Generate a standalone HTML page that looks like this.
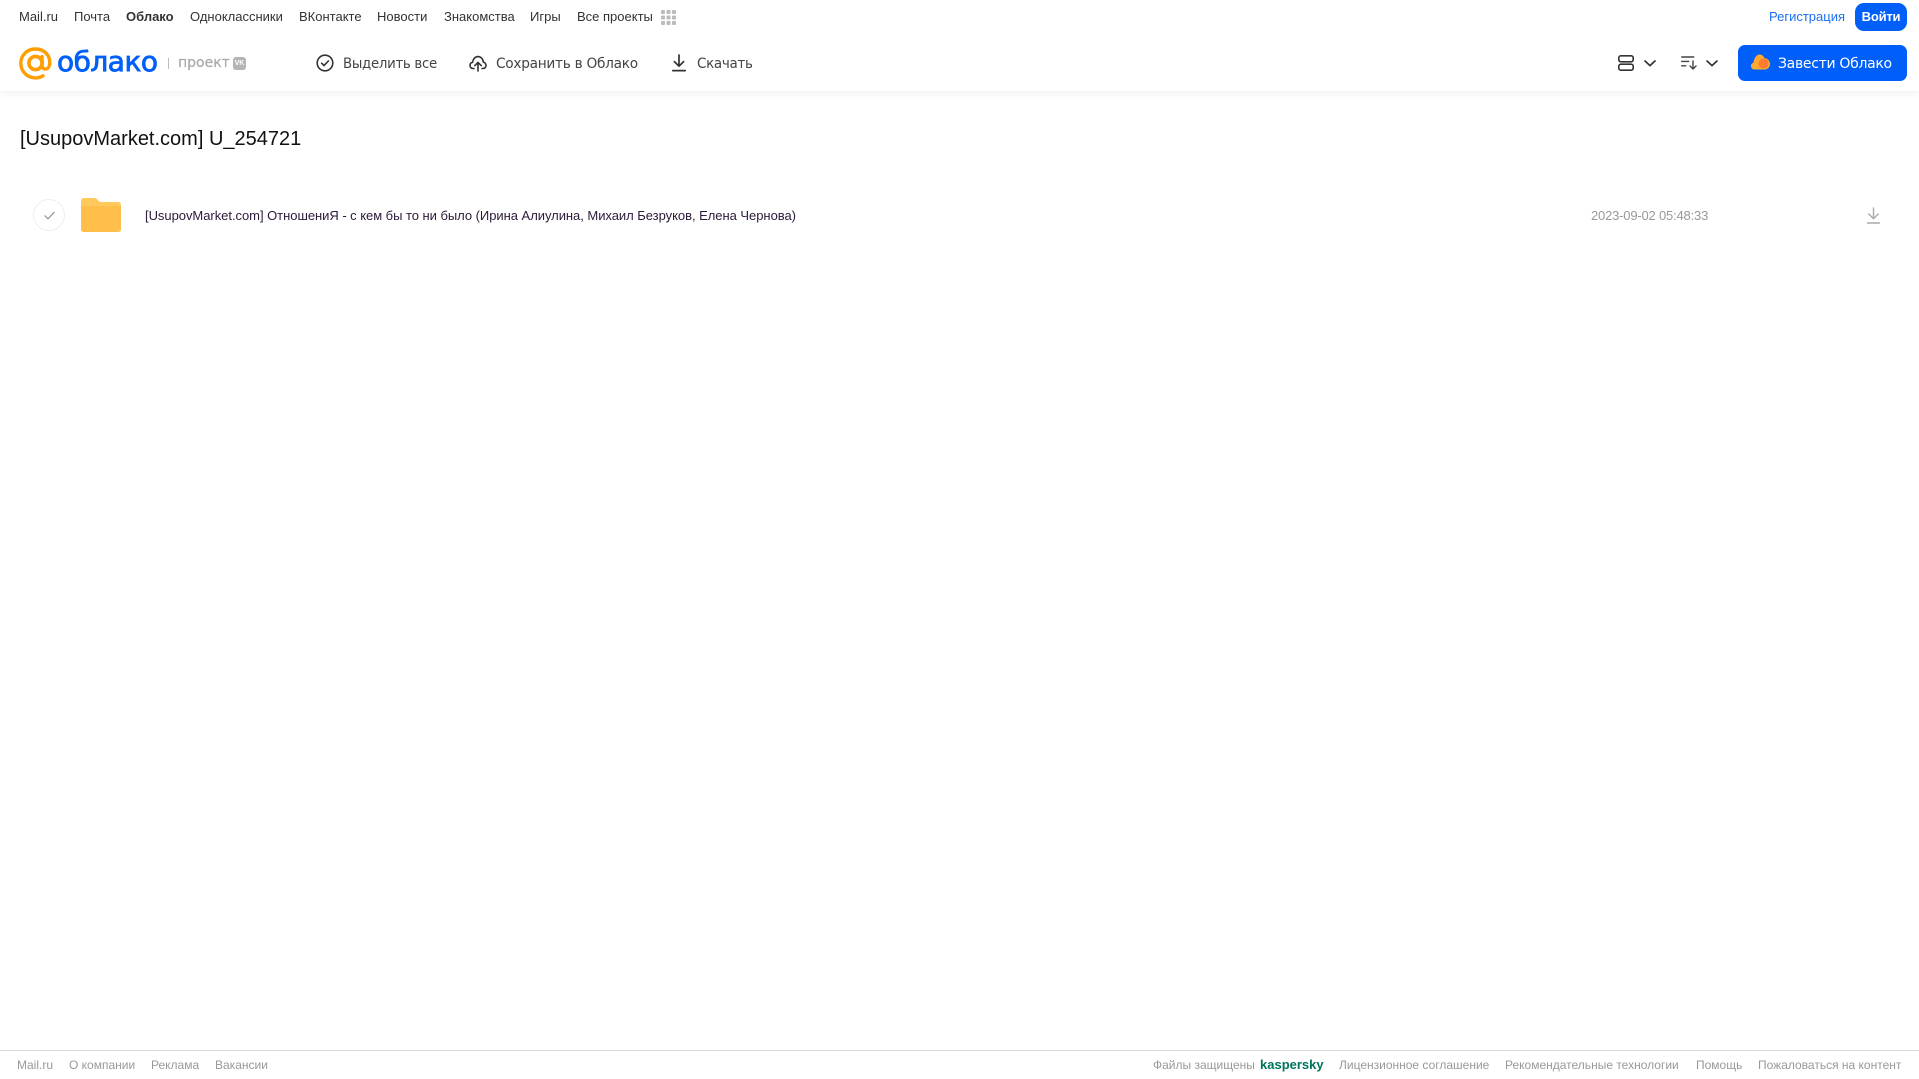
<!DOCTYPE html>
<html lang="ru">
<head>
<meta charset="utf-8">
<title>Облако</title>
<style>
html,body{margin:0;padding:0;background:#fff;}
body{width:1919px;height:1079px;position:relative;overflow:hidden;font-family:"Liberation Sans",Arial,sans-serif;}
.t{position:absolute;white-space:nowrap;line-height:20px;}
.n{top:7px;font-size:13px;color:#333;}
.a{top:54px;font-size:14px;color:#444;font-family:"DejaVu Sans","Liberation Sans",sans-serif;letter-spacing:-.3px;transform-origin:0 50%;}
.f{top:1055px;font-size:12px;color:#999;}
svg{position:absolute;overflow:visible;}
</style>
</head>
<body>
<div style="position:absolute;left:0;top:0;width:1919px;height:91px;background:#fff;box-shadow:0 2px 8px rgba(0,0,0,.07);"></div>

<span class="t n" style="left:19px;">Mail.ru</span>
<span class="t n" style="left:74px;">Почта</span>
<span class="t n" style="left:126px;font-weight:bold;">Облако</span>
<span class="t n" style="left:190px;">Одноклассники</span>
<span class="t n" style="left:299px;">ВКонтакте</span>
<span class="t n" style="left:377px;">Новости</span>
<span class="t n" style="left:444px;">Знакомства</span>
<span class="t n" style="left:530px;">Игры</span>
<span class="t n" style="left:577px;">Все проекты</span>
<svg style="left:661px;top:10px" width="15" height="15" viewBox="0 0 15 15" fill="#bbb">
<rect x="0" y="0" width="4" height="4" rx="1"/><rect x="5.5" y="0" width="4" height="4" rx="1"/><rect x="11" y="0" width="4" height="4" rx="1"/>
<rect x="0" y="5.5" width="4" height="4" rx="1"/><rect x="5.5" y="5.5" width="4" height="4" rx="1"/><rect x="11" y="5.5" width="4" height="4" rx="1"/>
<rect x="0" y="11" width="4" height="4" rx="1"/><rect x="5.5" y="11" width="4" height="4" rx="1"/><rect x="11" y="11" width="4" height="4" rx="1"/>
</svg>

<span class="t n" style="left:1769px;color:#1a6ff0;">Регистрация</span>
<div style="position:absolute;left:1855px;top:3px;width:52px;height:28px;border-radius:9px;background:#005ff9;color:#fff;font-size:13px;font-weight:bold;letter-spacing:-.2px;line-height:28px;text-align:center;">Войти</div>

<svg style="left:19px;top:47px" width="33" height="33" viewBox="0 0 33 33" fill="none">
<circle cx="16.5" cy="16" r="6.6" stroke="#ff9e00" stroke-width="3.6"/>
<path d="M23.1 9.6v8.8c0 2.4 1.6 3.7 3.3 3.7 2.3 0 3.9-2 4.3-5.3.7-8.5-5.600-14.800-14.200-14.800C8 2 1.800 8.300 1.800 16.300s6.300 14.600 14.600 14.600c2.900 0 5.300-.7 7.600-2.100" stroke="#ff9e00" stroke-width="3.4" stroke-linecap="round"/>
</svg>
<span class="t" style="left:57px;top:42px;line-height:40px;font-size:28px;color:#005ff9;font-family:'DejaVu Sans',sans-serif;letter-spacing:-.5px;-webkit-text-stroke:.8px #005ff9;">облако</span>
<div style="position:absolute;left:168px;top:58px;width:1px;height:11px;background:#bbb;"></div>
<span class="t" style="left:178px;top:53px;font-size:14px;color:#aaa;font-family:'DejaVu Sans',sans-serif;-webkit-text-stroke:.25px #aaa;">проект</span>
<div style="position:absolute;left:233px;top:57px;width:13px;height:13px;border-radius:3px;background:#b5b5b5;color:#fff;font-size:7px;font-weight:bold;line-height:13px;text-align:center;">VK</div>

<svg style="left:316px;top:54px" width="18" height="18" viewBox="0 0 18 18" fill="none" stroke="#333" stroke-width="1.6">
<circle cx="9" cy="9" r="7.8"/><path d="M5.6 9.2l2.4 2.4 4.4-4.6" stroke-linecap="round" stroke-linejoin="round"/>
</svg>
<span class="t a" style="left:343px;transform:scaleX(.95);">Выделить все</span>

<svg style="left:469px;top:54px" width="18" height="18" viewBox="0 0 18 18" fill="none" stroke="#333" stroke-width="1.6" stroke-linecap="round" stroke-linejoin="round">
<path d="M5 14.500H4.200C2.300 14.500 1 13.200 1 11.400c0-1.600 1.100-2.900 2.600-3.100C4 5 6.200 2.600 9 2.600c2.800 0 5 2.200 5.400 5.600 1.500.3 2.600 1.600 2.600 3.200 0 1.800-1.300 3.100-3.200 3.100H13"/>
<path d="M9 17V8.600M5.800 11.600L9 8.400l3.200 3.200"/>
</svg>
<span class="t a" style="left:496px;transform:scaleX(.98);">Сохранить в Облако</span>

<svg style="left:672px;top:54px" width="14" height="18" viewBox="0 0 14 18" fill="none" stroke="#333" stroke-width="1.7" stroke-linecap="round" stroke-linejoin="round">
<path d="M7 1v11M2.400 7.600L7 12.200l4.600-4.600M.8 16.600h12.400"/>
</svg>
<span class="t a" style="left:697px;transform:scaleX(.96);">Скачать</span>

<svg style="left:1618px;top:55px" width="16" height="16" viewBox="0 0 16 16" fill="none" stroke="#333" stroke-width="1.6">
<rect x=".8" y=".8" width="14.4" height="6" rx="2"/><rect x=".8" y="9.2" width="14.4" height="6" rx="2"/>
</svg>
<svg style="left:1644px;top:60px" width="12" height="7" viewBox="0 0 12 7" fill="none" stroke="#333" stroke-width="1.7" stroke-linecap="round" stroke-linejoin="round"><path d="M1 1l5 4.600L11 1"/></svg>
<svg style="left:1681px;top:56px" width="16" height="14" viewBox="0 0 16 14" fill="none" stroke="#444" stroke-width="1.4" stroke-linecap="round" stroke-linejoin="round">
<path d="M.7 1h12M.7 5.400h7M.7 9.800h4M12 5v8M9 10l3 3 3-3"/>
</svg>
<svg style="left:1706px;top:60px" width="12" height="7" viewBox="0 0 12 7" fill="none" stroke="#333" stroke-width="1.7" stroke-linecap="round" stroke-linejoin="round"><path d="M1 1l5 4.600L11 1"/></svg>

<div style="position:absolute;left:1738px;top:45px;width:169px;height:36px;border-radius:7px;background:#005ff9;"></div>
<svg style="left:1751px;top:54px" width="19" height="16" viewBox="0 0 19 16">
<path d="M3.500 15.500C1.500 15.500 0 14 0 12c0-1.700 1.100-3 2.600-3.400C3 4 5.600.5 8.500.5c2.300 0 4 1.400 4.800 3.500 3.300.3 5.700 2.900 5.700 6 0 3-2.400 5.500-5.500 5.500z" fill="#ffa930"/>
<circle cx="12.500" cy="9.500" r="5" fill="#ff7a2a"/>
</svg>
<span class="t a" style="left:1778px;color:#fff;">Завести Облако</span>

<span class="t" style="left:20px;top:127px;line-height:24px;font-size:20px;color:#111;">[UsupovMarket.com] U_254721</span>

<div style="position:absolute;left:33px;top:199px;width:30px;height:30px;border:1px solid #eee;border-radius:50%;"></div>
<svg style="left:43.5px;top:211px" width="11" height="9" viewBox="0 0 11 9" fill="none" stroke="#999" stroke-width="1.3" stroke-linecap="round" stroke-linejoin="round"><path d="M1 4.800l3 3L10 1.500"/></svg>

<svg style="left:81px;top:198px" width="40" height="34" viewBox="0 0 40 34">
<path d="M3 0h10c2 0 3 .8 4 2.200L19 4h18c1.700 0 3 1.300 3 3v24c0 1.700-1.300 3-3 3H3c-1.700 0-3-1.300-3-3V3C0 1.300 1.300 0 3 0z" fill="#ffc95c"/>
<path d="M0 8h40v23c0 1.700-1.300 3-3 3H3c-1.700 0-3-1.300-3-3z" fill="#ffbf4a"/>
</svg>

<span class="t" style="left:145px;top:206px;font-size:13px;color:#2c1a3a;letter-spacing:-.037px;">[UsupovMarket.com] ОтношениЯ - с кем бы то ни было (Ирина Алиулина, Михаил Безруков, Елена Чернова)</span>
<span class="t" style="left:1591px;top:206px;font-size:13px;color:#999;letter-spacing:-.19px;">2023-09-02 05:48:33</span>
<svg style="left:1866.500px;top:207px" width="13" height="17" viewBox="0 0 13 17" fill="none" stroke="#aaa" stroke-width="1.400" stroke-linecap="round" stroke-linejoin="round">
<path d="M6.500 1v10.500M1.800 7l4.700 4.700L11.200 7M.5 16h12"/>
</svg>

<div style="position:absolute;left:0;top:1050px;width:1919px;height:1px;background:#d9d9d9;"></div>
<span class="t f" style="left:17px;">Mail.ru</span>
<span class="t f" style="left:69px;">О компании</span>
<span class="t f" style="left:151px;">Реклама</span>
<span class="t f" style="left:215px;">Вакансии</span>
<span class="t f" style="left:1153px;">Файлы защищены</span>
<span class="t f" style="left:1260px;font-size:13px;font-weight:bold;color:#00745c;">kaspersky</span>
<span class="t f" style="left:1339px;">Лицензионное соглашение</span>
<span class="t f" style="left:1505px;">Рекомендательные технологии</span>
<span class="t f" style="left:1696px;">Помощь</span>
<span class="t f" style="left:1758px;">Пожаловаться на контент</span>
</body>
</html>
